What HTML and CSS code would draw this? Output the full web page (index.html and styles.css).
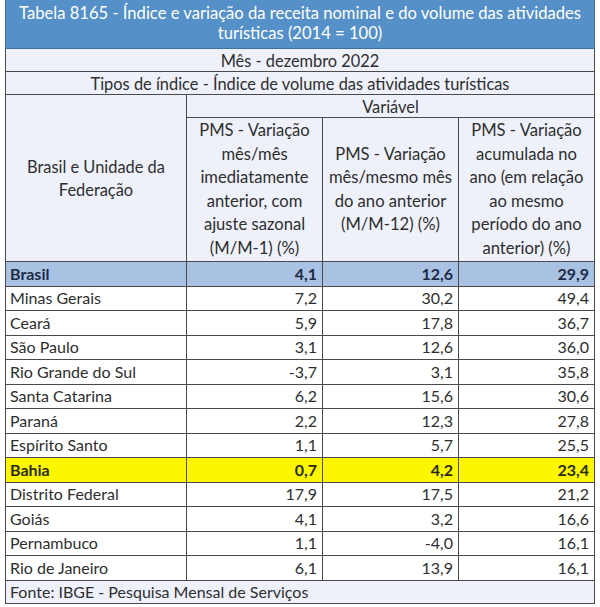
FILE: index.html
```html
<!DOCTYPE html>
<html lang="pt-BR">
<head>
<meta charset="utf-8">
<title>Tabela 8165</title>
<link rel="stylesheet" href="styles.css">
</head>
<body>
<table class="tbl">
  <colgroup>
    <col class="c1"><col class="c2"><col class="c3"><col class="c4">
  </colgroup>
  <thead>
    <tr class="title"><th colspan="4">Tabela 8165 - Índice e variação da receita nominal e do volume das atividades<br>turísticas (2014 = 100)</th></tr>
    <tr class="meta"><th colspan="4">Mês - dezembro 2022</th></tr>
    <tr class="meta"><th colspan="4">Tipos de índice - Índice de volume das atividades turísticas</th></tr>
    <tr class="meta"><th rowspan="2" class="uf">Brasil e Unidade da<br>Federação</th><th colspan="3">Variável</th></tr>
    <tr class="vars">
      <th>PMS - Variação<br>mês/mês<br>imediatamente<br>anterior, com<br>ajuste sazonal<br>(M/M-1) (%)</th>
      <th>PMS - Variação<br>mês/mesmo mês<br>do ano anterior<br>(M/M-12) (%)</th>
      <th>PMS - Variação<br>acumulada no<br>ano (em relação<br>ao mesmo<br>período do ano<br>anterior) (%)</th>
    </tr>
  </thead>
  <tbody>
    <tr class="row hl-br"><td>Brasil</td><td>4,1</td><td>12,6</td><td>29,9</td></tr>
    <tr class="row"><td>Minas Gerais</td><td>7,2</td><td>30,2</td><td>49,4</td></tr>
    <tr class="row"><td>Ceará</td><td>5,9</td><td>17,8</td><td>36,7</td></tr>
    <tr class="row"><td>São Paulo</td><td>3,1</td><td>12,6</td><td>36,0</td></tr>
    <tr class="row"><td>Rio Grande do Sul</td><td>-3,7</td><td>3,1</td><td>35,8</td></tr>
    <tr class="row"><td>Santa Catarina</td><td>6,2</td><td>15,6</td><td>30,6</td></tr>
    <tr class="row"><td>Paraná</td><td>2,2</td><td>12,3</td><td>27,8</td></tr>
    <tr class="row"><td>Espírito Santo</td><td>1,1</td><td>5,7</td><td>25,5</td></tr>
    <tr class="row hl-ba"><td>Bahia</td><td>0,7</td><td>4,2</td><td>23,4</td></tr>
    <tr class="row"><td>Distrito Federal</td><td>17,9</td><td>17,5</td><td>21,2</td></tr>
    <tr class="row"><td>Goiás</td><td>4,1</td><td>3,2</td><td>16,6</td></tr>
    <tr class="row"><td>Pernambuco</td><td>1,1</td><td>-4,0</td><td>16,1</td></tr>
    <tr class="row"><td>Rio de Janeiro</td><td>6,1</td><td>13,9</td><td>16,1</td></tr>
  </tbody>
  <tfoot>
    <tr class="foot"><td colspan="4">Fonte: IBGE - Pesquisa Mensal de Serviços</td></tr>
  </tfoot>
</table>
</body>
</html>
```
FILE: styles.css
```css
html, body {
  margin: 0;
  padding: 0;
  background: #ffffff;
}
body {
  font-family: Lato, "Open Sans", sans-serif;
  font-size: 16px;
  color: #2e2e2e;
}
.tbl {
  margin-left: 5px;
  width: 590px;
  border-collapse: collapse;
  table-layout: fixed;
}
.c1 { width: 181px; }
.c2, .c3, .c4 { width: 136px; }
.tbl th, .tbl td {
  border: 1px solid #4a4a4a;
  padding: 0 5px;
  font-weight: normal;
}
.title th {
  background: #5590c9;
  color: #ffffff;
  height: 46px;
  font-size: 16.6px;
  line-height: 20px;
  padding: 0 2px 2px;
  border-top: none;
  border-color: #3f6f9f;
  white-space: nowrap;
}
.meta th {
  background: #eef1f9;
  height: 22px;
  font-size: 16.4px;
  line-height: 21px;
  text-align: center;
}
.meta th.uf {
  line-height: 23px;
  padding: 0 2px;
}
.vars th {
  background: #eef1f9;
  height: 143px;
  font-size: 16.6px;
  line-height: 23.5px;
  text-align: center;
  padding: 0 2px;
  white-space: nowrap;
}
.row td {
  height: 23.5px;
  line-height: 20px;
  text-align: right;
  background: #ffffff;
}
.row td:first-child {
  text-align: left;
  padding-left: 4px;
}
.hl-br td {
  background: #a9c2e3;
  font-weight: bold;
  color: #1e2b45;
}
.hl-ba td {
  background: #fcf600;
  font-weight: bold;
  color: #2a2a10;
}
.foot td {
  background: #eef1f9;
  height: 22px;
  line-height: 20px;
  text-align: left;
  padding-left: 4px;
}
```
